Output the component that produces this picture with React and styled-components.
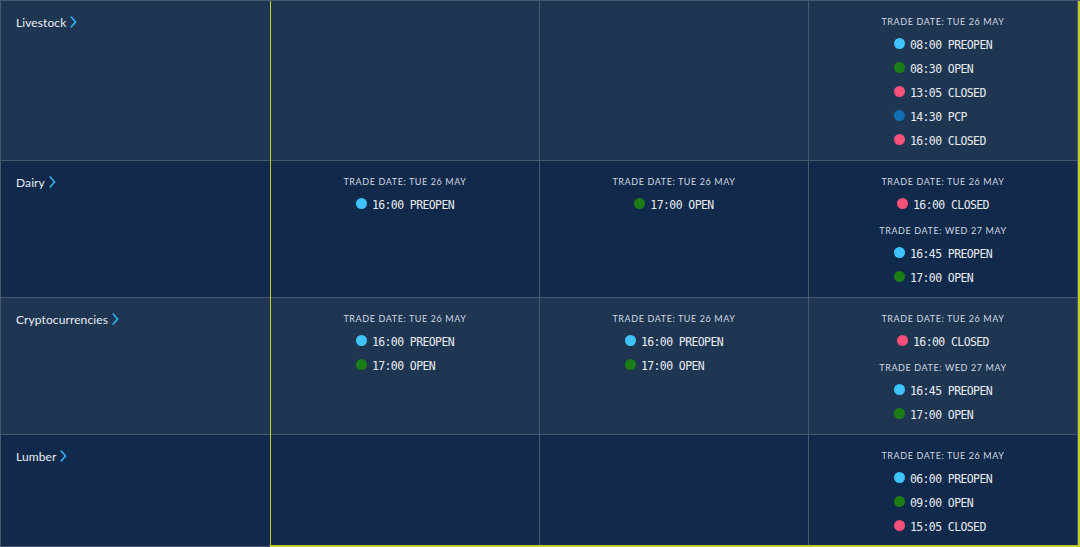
import React from 'react';
import styled, { createGlobalStyle } from 'styled-components';

const GlobalStyle = createGlobalStyle`
  html, body {
    margin: 0;
    padding: 0;
    background: #11294a;
  }
  body {
    font-family: Lato, "Open Sans", sans-serif;
  }
`;

const Table = styled.div`
  position: relative;
  width: 1080px;
  height: 547px;
  overflow: hidden;
  display: grid;
  grid-template-columns: 270px 1fr 1fr 1fr 2px;
  align-content: start;
  border-top: 1px solid #46596f;
  border-left: 1px solid #46596f;
  box-sizing: border-box;
`;

const Cell = styled.div`
  background: ${p => (p.$alt ? '#11294a' : '#1f3653')};
  border-right: 1px solid #46596f;
  border-bottom: 1px solid #46596f;
  padding: 14px 0 7px;
  display: flex;
  flex-direction: column;
  align-items: ${p => (p.$label ? 'flex-start' : 'center')};
  padding-left: ${p => (p.$label ? '15px' : '0')};
`;

const Gutter = styled.div`
  background: ${p => (p.$alt ? '#11294a' : '#1f3653')};
`;

const Category = styled.div`
  display: flex;
  align-items: center;
  gap: 4px;
  height: 14px;
  font-size: 12px;
  color: #e9edf2;
  letter-spacing: 0.1px;
`;

const Group = styled.div`
  display: flex;
  flex-direction: column;
  align-items: center;
  & + & {
    margin-top: 7px;
  }
`;

const DateHead = styled.div`
  height: 14px;
  line-height: 14px;
  font-size: 9px;
  letter-spacing: 0.6px;
  color: #d2d8e0;
  text-transform: uppercase;
  margin-bottom: 4px;
`;

const Times = styled.div`
  display: flex;
  flex-direction: column;
  align-items: flex-start;
`;

const TimeRow = styled.div`
  display: flex;
  align-items: center;
  gap: 5px;
  height: 24px;
  font-family: "DejaVu Sans Mono", "Liberation Mono", monospace;
  font-size: 11.5px;
  letter-spacing: -0.6px;
  color: #e8ecf1;
`;

const Dot = styled.span`
  width: 11px;
  height: 11px;
  border-radius: 50%;
  background: ${p => p.$color};
  margin-bottom: 3px;
  flex: none;
`;

const Focus = styled.div`
  position: absolute;
  left: 269px;
  right: 0;
  top: -4px;
  bottom: 0;
  border: 2px solid #c4cc2c;
  border-left-width: 1px;
  pointer-events: none;
`;

const COLORS = {
  PREOPEN: '#3ec4fb',
  OPEN: '#1c7d16',
  CLOSED: '#f7507a',
  PCP: '#136fb5',
};

const Chevron = () => (
  <svg width="7" height="12" viewBox="0 0 7 12" fill="none">
    <path d="M1.2 1 L5.6 6 L1.2 11" stroke="#31b3f1" strokeWidth="1.6" strokeLinecap="round" strokeLinejoin="round" />
  </svg>
);

const rows = [
  {
    name: 'Livestock',
    cells: [
      [],
      [],
      [{ date: 'Trade date: Tue 26 May', times: [['08:00', 'PREOPEN'], ['08:30', 'OPEN'], ['13:05', 'CLOSED'], ['14:30', 'PCP'], ['16:00', 'CLOSED']] }],
    ],
  },
  {
    name: 'Dairy',
    cells: [
      [{ date: 'Trade date: Tue 26 May', times: [['16:00', 'PREOPEN']] }],
      [{ date: 'Trade date: Tue 26 May', times: [['17:00', 'OPEN']] }],
      [
        { date: 'Trade date: Tue 26 May', times: [['16:00', 'CLOSED']] },
        { date: 'Trade date: Wed 27 May', times: [['16:45', 'PREOPEN'], ['17:00', 'OPEN']] },
      ],
    ],
  },
  {
    name: 'Cryptocurrencies',
    cells: [
      [{ date: 'Trade date: Tue 26 May', times: [['16:00', 'PREOPEN'], ['17:00', 'OPEN']] }],
      [{ date: 'Trade date: Tue 26 May', times: [['16:00', 'PREOPEN'], ['17:00', 'OPEN']] }],
      [
        { date: 'Trade date: Tue 26 May', times: [['16:00', 'CLOSED']] },
        { date: 'Trade date: Wed 27 May', times: [['16:45', 'PREOPEN'], ['17:00', 'OPEN']] },
      ],
    ],
  },
  {
    name: 'Lumber',
    cells: [
      [],
      [],
      [{ date: 'Trade date: Tue 26 May', times: [['06:00', 'PREOPEN'], ['09:00', 'OPEN'], ['15:05', 'CLOSED']] }],
    ],
  },
];

export default function App() {
  return (
    <>
      <GlobalStyle />
      <Table>
        {rows.map((row, i) => {
          const alt = i % 2 === 1;
          return (
            <React.Fragment key={row.name}>
              <Cell $alt={alt} $label>
                <Category>
                  {row.name}
                  <Chevron />
                </Category>
              </Cell>
              {row.cells.map((groups, j) => (
                <Cell $alt={alt} key={j}>
                  {groups.map((g, k) => (
                    <Group key={k}>
                      <DateHead>{g.date}</DateHead>
                      <Times>
                        {g.times.map(([t, s]) => (
                          <TimeRow key={t + s}>
                            <Dot $color={COLORS[s]} />
                            {t} {s}
                          </TimeRow>
                        ))}
                      </Times>
                    </Group>
                  ))}
                </Cell>
              ))}
              <Gutter $alt={alt} />
            </React.Fragment>
          );
        })}
        <Focus />
      </Table>
    </>
  );
}
